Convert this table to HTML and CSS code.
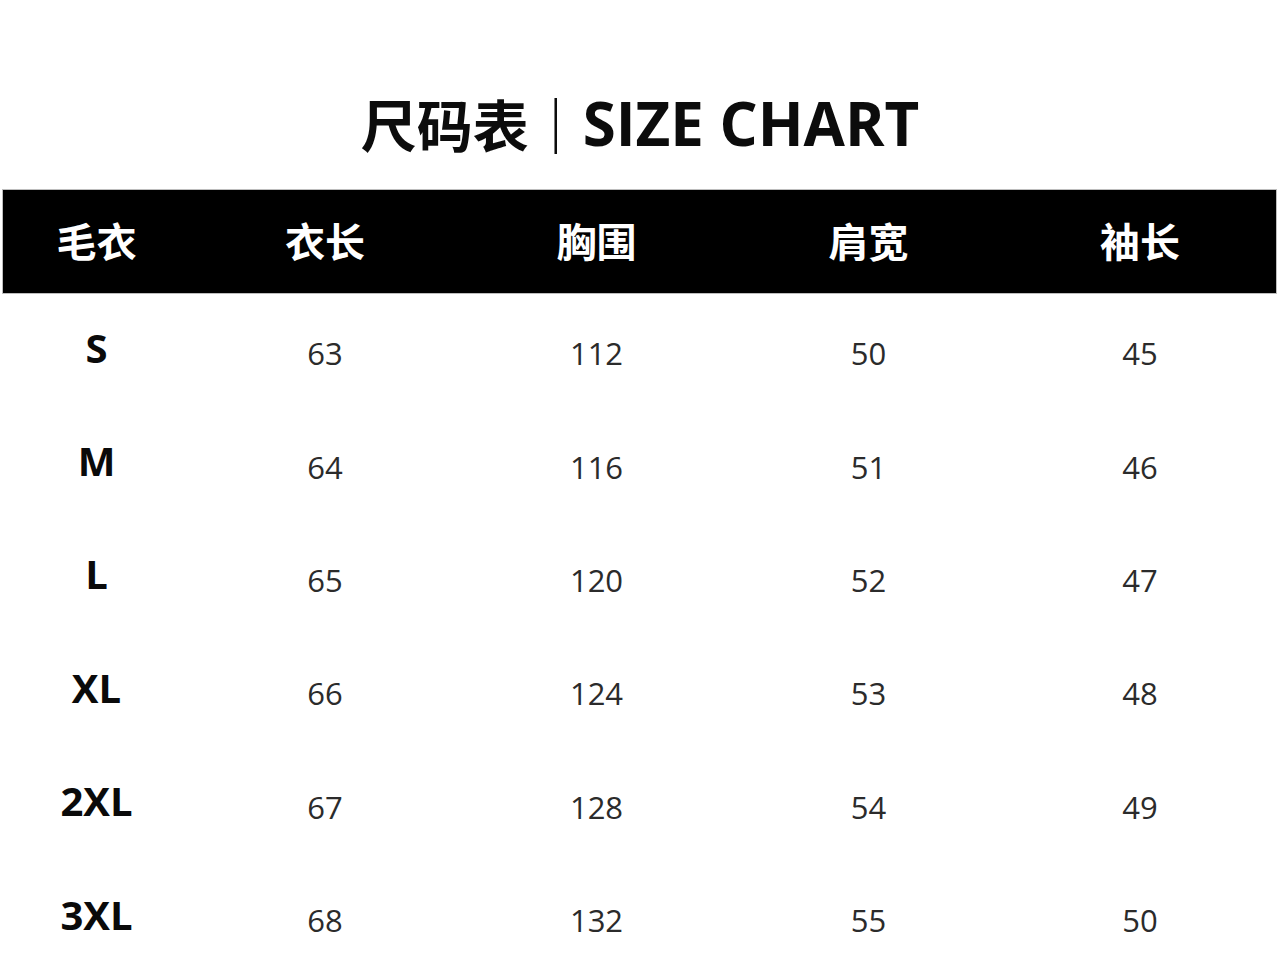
FILE: index.html
```html
<!DOCTYPE html>
<html lang="zh">
<head>
<meta charset="utf-8">
<title>尺码表 | SIZE CHART</title>
<link rel="stylesheet" href="styles.css">
</head>
<body>
<div class="page">
  <h1 class="title"><span class="cn">尺码表</span><span class="bar">｜</span><span class="en">SIZE CHART</span></h1>
  <div class="chart">
    <div class="head">
      <div class="hc">毛衣</div>
      <div class="hc">衣长</div>
      <div class="hc">胸围</div>
      <div class="hc">肩宽</div>
      <div class="hc">袖长</div>
    </div>
    <div class="row"><div class="size">S</div><div class="num">63</div><div class="num">112</div><div class="num">50</div><div class="num">45</div></div>
    <div class="row"><div class="size">M</div><div class="num">64</div><div class="num">116</div><div class="num">51</div><div class="num">46</div></div>
    <div class="row"><div class="size">L</div><div class="num">65</div><div class="num">120</div><div class="num">52</div><div class="num">47</div></div>
    <div class="row"><div class="size">XL</div><div class="num">66</div><div class="num">124</div><div class="num">53</div><div class="num">48</div></div>
    <div class="row"><div class="size">2XL</div><div class="num">67</div><div class="num">128</div><div class="num">54</div><div class="num">49</div></div>
    <div class="row"><div class="size">3XL</div><div class="num">68</div><div class="num">132</div><div class="num">55</div><div class="num">50</div></div>
  </div>
</div>
</body>
</html>
```

FILE: styles.css
```css
html, body {
  margin: 0;
  padding: 0;
  background: #fff;
}
body {
  font-family: "Open Sans", "Noto Sans CJK SC", sans-serif;
  color: #111;
  width: 1280px;
  height: 973px;
  overflow: hidden;
}
.page {
  display: flex;
  flex-direction: column;
}
.title {
  margin: 0;
  height: 190px;
  box-sizing: border-box;
  padding-top: 88px;
  display: flex;
  justify-content: center;
  align-items: flex-start;
  font-size: 60px;
  line-height: 70px;
  font-weight: 700;
  color: #0c0c0c;
  letter-spacing: 0;
}
.title .cn {
  font-family: "Noto Sans CJK SC", sans-serif;
  font-size: 56px;
}
.title .bar {
  font-family: "Noto Sans CJK SC", sans-serif;
  font-weight: 700;
  font-size: 56px;
  margin: 0 -1px;
}
.chart {
  margin-left: 3px;
  width: 1273px;
}
.head, .row {
  display: grid;
  grid-template-columns: 187px 270px 273px 271px 272px;
}
.head {
  background: #000;
  height: 103px;
  box-shadow: 0 0 0 1px #bdbdbd;
  align-items: center;
}
.hc {
  color: #fff;
  font-family: "Noto Sans CJK SC", sans-serif;
  font-weight: 700;
  font-size: 40px;
  text-align: center;
  line-height: 1;
  padding-bottom: 4px;
}
.row {
  height: 113.4px;
  align-items: center;
}
.size {
  text-align: center;
  font-weight: 700;
  font-size: 40px;
  line-height: 1;
  color: #0a0a0a;
  padding-bottom: 4px;
}
.num {
  text-align: center;
  font-size: 31px;
  line-height: 1;
  color: #2b2b2b;
  padding-top: 8px;
}
```
